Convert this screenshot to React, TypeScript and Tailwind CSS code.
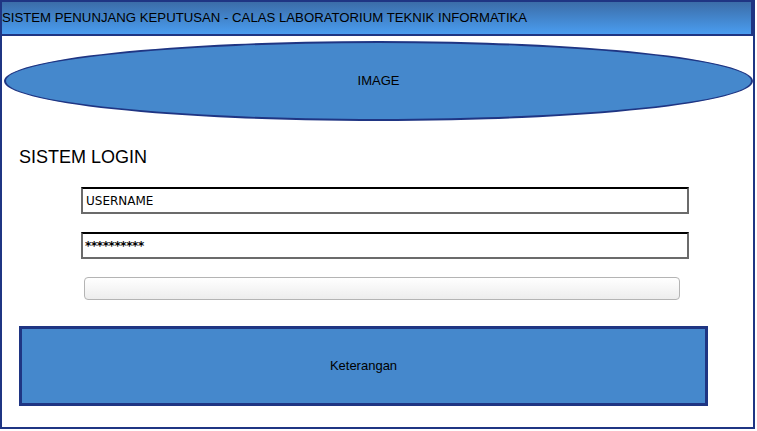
export default function App() {
  return (
    <div className="w-[757px] h-[431px] bg-white" style={{ fontFamily: '"Liberation Sans", Arial, sans-serif' }}>
      <div className="w-[755px] h-[429px] border-x-2 border-b-2 border-[#1f3583] flex flex-col">
        {/* header bar */}
        <div className="-mx-[2px] w-[753px] h-[36px] border-2 border-[#1f3583] bg-gradient-to-b from-[#3b6da8] to-[#4a9df0] flex items-center text-[13.2px] text-black">
          SISTEM PENUNJANG KEPUTUSAN - CALAS LABORATORIUM TEKNIK INFORMATIKA
        </div>

        <div className="mt-[5px] ml-[2px] w-[749px] h-[80px] rounded-[50%] border-2 border-[#1f3583] bg-[#4588cc] flex items-center justify-center text-[13px] text-black">
          IMAGE
        </div>

        <div className="mt-[25px] ml-[17px] text-[18px] leading-[22px] text-black">SISTEM LOGIN</div>

        <div className="flex flex-col ml-[79px] mt-[19px]" style={{ fontFamily: '"DejaVu Sans", sans-serif' }}>
          <div className="w-[608px] h-[27px] border-2 border-[#6b6b6b] border-t-black flex items-center pl-[3px] text-[12px] text-black">
            USERNAME
          </div>
          <div className="mt-[18px] w-[608px] h-[27px] border-2 border-[#6b6b6b] border-t-black flex items-center pl-[2px] text-[12px] font-bold tracking-[-0.4px] text-black">
            **********
          </div>
          <div className="mt-[18px] ml-[3px] w-[596px] h-[23px] rounded-[4px] border border-[#b4b4b4] bg-gradient-to-b from-white to-[#ededed]" />
        </div>

        <div className="mt-[26px] ml-[17px] w-[689px] h-[80px] border-[3px] border-[#1f3583] bg-[#4588cc] flex items-center justify-center text-[13px] text-black">
          Keterangan
        </div>
      </div>
    </div>
  );
}
